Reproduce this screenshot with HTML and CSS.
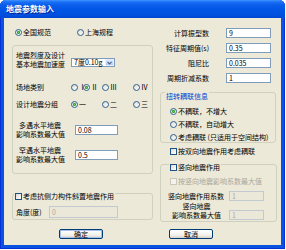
FILE: index.html
```html
<!DOCTYPE html>
<html lang="zh-CN">
<head>
  <meta charset="UTF-8">
  <meta name="viewport" content="width=device-width, initial-scale=1.0">
  <title>地震参数输入</title>
  <link rel="stylesheet" href="styles.css">
</head>
<body>

  <div class="window">
    <div class="titlebar">地震参数输入</div>

    <div class="client">
      <div class="columns">

        <!-- coluna esquerda -->
        <div class="left">
          <div class="code-row">
            <span class="opt opt-code"><span class="radio on"></span>全国规范</span>
            <span class="opt"><span class="radio"></span>上海规程</span>
          </div>

          <div class="group group-site">
            <div class="row row-accel">
              <div class="label label-wide label-two">地震烈度及设计<br>基本地震加速度</div>
              <div class="combo">
                <span class="combo-text">7度0.10g</span>
                <span class="combo-btn">
                  <svg width="5" height="4" viewBox="0 0 5 4"><path d="M0.5 0.8 L2.5 2.8 L4.5 0.8" fill="none" stroke="#4D6185" stroke-width="1.2"/></svg>
                </span>
              </div>
            </div>

            <div class="row row-site">
              <div class="label label-wide">场地类别</div>
              <div class="choices choices-site">
                <span class="opt"><span class="radio"></span>Ⅰ</span>
                <span class="opt"><span class="radio on"></span>Ⅱ</span>
                <span class="opt"><span class="radio"></span>Ⅲ</span>
                <span class="opt"><span class="radio"></span>Ⅳ</span>
              </div>
            </div>

            <div class="row row-group">
              <div class="label label-wide">设计地震分组</div>
              <div class="choices choices-group">
                <span class="opt"><span class="radio on"></span>一</span>
                <span class="opt"><span class="radio"></span>二</span>
                <span class="opt"><span class="radio"></span>三</span>
              </div>
            </div>

            <div class="row row-coef row-often">
              <div class="label label-coef label-two">多遇水平地震<br>影响系数最大值</div>
              <div class="field field-coef">0.08</div>
            </div>

            <div class="row row-coef row-rare">
              <div class="label label-coef label-two">罕遇水平地震<br>影响系数最大值</div>
              <div class="field field-coef">0.5</div>
            </div>
          </div>

          <div class="group group-angle">
            <div class="legend legend-angle"><span class="check"></span>考虑抗侧力构件斜置地震作用</div>
            <div class="row row-angle">
              <div class="label label-angle">角度(度)</div>
              <div class="field field-angle disabled">0</div>
            </div>
          </div>
        </div>

        <!-- coluna direita -->
        <div class="right">
          <div class="param-row">
            <div class="param-label">计算振型数</div>
            <div class="field param-field">9</div>
          </div>
          <div class="param-row">
            <div class="param-label">特征周期值(s)</div>
            <div class="field param-field">0.35</div>
          </div>
          <div class="param-row">
            <div class="param-label">阻尼比</div>
            <div class="field param-field">0.035</div>
          </div>
          <div class="param-row">
            <div class="param-label">周期折减系数</div>
            <div class="field param-field">1</div>
          </div>

          <div class="group group-torsion">
            <div class="legend legend-title">扭转耦联信息</div>
            <div class="opt radio-row first"><span class="radio on"></span>不耦联，不增大</div>
            <div class="opt radio-row"><span class="radio"></span>不耦联，自动增大</div>
            <div class="opt radio-row"><span class="radio"></span>考虑耦联 (只适用于空间结构)</div>
          </div>

          <div class="opt check-row"><span class="check"></span>按双向地震作用考虑耦联</div>

          <div class="group group-vertical">
            <div class="legend legend-vertical"><span class="check"></span>竖向地震作用</div>
            <div class="opt check-row-inner disabled-text"><span class="check off"></span>按竖向地震影响系数最大值</div>
            <div class="row row-vcoef">
              <div class="label label-vcoef">竖向地震作用系数</div>
              <div class="field field-v disabled">1</div>
            </div>
            <div class="row row-vmax">
              <div class="label label-vmax label-two">竖向地震<br>影响系数最大值</div>
              <div class="field field-v disabled">1</div>
            </div>
          </div>
        </div>

      </div>

      <div class="footer">
        <div class="btn btn-default">确定</div>
        <div class="btn">取消</div>
      </div>
    </div>
  </div>

</body>
</html>
```

FILE: styles.css
```css
* {
  box-sizing: border-box;
}

body {
  margin: 0;
  background: #fff;
  font-family: "Noto Sans CJK SC", "Noto Sans", sans-serif;
  font-size: 7px;
  line-height: 7px;
  color: #000;
}

.window {
  width: 285px;
  height: 249px;
  display: flex;
  flex-direction: column;
  background: #0A52E0;
  border-radius: 6px 6px 0 0;
  box-shadow: inset 1px 0 #0831D9, inset -1px 0 #0831D9, inset 0 -1px #0831D9;
}

.titlebar {
  height: 18px;
  padding-left: 6px;
  border-radius: 6px 6px 0 0;
  background: linear-gradient(#3D95FF 0, #1A6FF5 2px, #0A5EEA 5px, #0055E5 10px, #0050DE 15px, #0048D4 18px);
  color: #fff;
  font-size: 8px;
  font-weight: bold;
  line-height: 18px;
  text-shadow: 1px 1px #0A1E8C;
}

.client {
  flex: 1;
  margin: 0 4px 4px;
  padding: 10px 4px 0 8px;
  background: #ECE9D8;
}

.columns {
  display: flex;
}

.left {
  width: 141px;
}

.right {
  width: 117px;
  margin-left: 7px;
}

/* radios e checkboxes */
.opt {
  display: inline-flex;
  align-items: center;
  gap: 1px;
  white-space: nowrap;
}

.radio {
  flex: none;
  width: 7px;
  height: 7px;
  border: 1px solid #2E5F8E;
  border-radius: 50%;
  background: linear-gradient(135deg, #DCDBD5, #fff);
}

.radio.on {
  background: radial-gradient(circle, #5FD45F 0, #21A121 1.2px, transparent 1.8px), linear-gradient(135deg, #DCDBD5, #fff);
}

.check {
  flex: none;
  width: 7px;
  height: 7px;
  border: 1px solid #1C5180;
  background: linear-gradient(135deg, #DCDBD5, #fff);
}

.check.off {
  border-color: #CAC8BB;
  background: #F4F3EE;
}

.disabled-text {
  color: #ACA899;
}

/* caixas de grupo */
.group {
  border: 1px solid #D0D0BF;
  border-radius: 3px;
}

.legend {
  display: inline-flex;
  align-items: center;
  gap: 1px;
  height: 9px;
  margin-top: -5px;
  padding: 0 1px;
  background: #ECE9D8;
  white-space: nowrap;
}

.row {
  display: flex;
  align-items: center;
}

.label {
  white-space: nowrap;
}

.label-two {
  line-height: 9px;
}

.field {
  display: flex;
  align-items: center;
  height: 10px;
  padding-left: 2px;
  border: 1px solid #7F9DB9;
  background: #fff;
}

.field.disabled {
  border-color: #C3C9D1;
  background: #EBE8D9;
  color: #ACA899;
}

/* coluna esquerda */
.code-row {
  display: flex;
  align-items: center;
  height: 9px;
  padding-left: 3px;
}

.opt-code {
  width: 62px;
}

.group-site {
  height: 129px;
  margin-top: 8px;
  padding-left: 3px;
}

.row-accel {
  height: 18px;
  margin-top: 5px;
  align-items: flex-start;
}

.label-wide {
  width: 55px;
}

.combo {
  display: flex;
  width: 44px;
  height: 9px;
  margin-top: 7px;
  border: 1px solid #7F9DB9;
  background: #fff;
}

.combo-text {
  flex: 1;
  align-self: center;
  padding-left: 2px;
}

.combo-btn {
  display: flex;
  align-items: center;
  justify-content: center;
  width: 9px;
  border: 1px solid #E6EEFD;
  border-radius: 1px;
  background: linear-gradient(#DDE8FE, #B5CCFA);
}

.row-site {
  height: 10px;
  margin-top: 13px;
}

.row-group {
  height: 10px;
  margin-top: 7px;
}

.choices {
  display: grid;
  align-items: center;
}

.choices-site {
  grid-template-columns: 12px 19px 31px auto;
}

.choices-group {
  grid-template-columns: 31px 31px auto;
}

.row-coef {
  height: 18px;
}

.row-often {
  margin-top: 12px;
}

.row-rare {
  margin-top: 7px;
}

.label-coef {
  width: 48px;
  text-align: center;
}

.field-coef {
  width: 43px;
  margin-left: 11px;
}

.group-angle {
  height: 27px;
  margin-top: 19px;
}

.legend-angle {
  margin-left: 1px;
}

.row-angle {
  height: 12px;
  margin-top: 5px;
  padding-left: 3px;
}

.label-angle {
  width: 33px;
}

.field-angle {
  width: 69px;
  height: 12px;
}

/* coluna direita */
.param-row {
  display: flex;
  align-items: center;
  height: 10px;
  margin-top: 5px;
}

.param-row:first-child {
  margin-top: 0;
}

.param-label {
  width: 49px;
  text-align: right;
  white-space: nowrap;
}

.param-field {
  width: 45px;
  margin-left: 17px;
}

.group-torsion {
  width: 116px;
  height: 51px;
  margin-top: 9px;
}

.legend-title {
  margin-left: 4px;
  color: #0046D5;
}

.radio-row {
  display: flex;
  height: 9px;
  margin-top: 4px;
  padding-left: 9px;
}

.radio-row.first {
  margin-top: 6px;
}

.check-row {
  display: flex;
  height: 9px;
  margin-top: 4px;
  padding-left: 10px;
}

.group-vertical {
  height: 58px;
  margin-top: 8px;
}

.legend-vertical {
  margin-left: 8px;
}

.check-row-inner {
  display: flex;
  height: 9px;
  margin-top: 5px;
  padding-left: 9px;
}

.row-vcoef {
  height: 10px;
  margin-top: 5px;
}

.row-vmax {
  height: 18px;
  margin-top: 1px;
  align-items: flex-end;
}

.label-vcoef {
  width: 57px;
  margin-left: 7px;
}

.label-vmax {
  width: 57px;
  margin-left: 7px;
  text-align: center;
}

.field-v {
  width: 35px;
  margin-left: 4px;
}

/* botões */
.footer {
  display: flex;
  gap: 66px;
  margin-top: 7px;
  padding-left: 47px;
}

.btn {
  display: flex;
  align-items: center;
  justify-content: center;
  width: 44px;
  height: 10px;
  border: 1px solid #003C74;
  border-radius: 2px;
  background: linear-gradient(#FFFFFF, #F3F2EC 60%, #D8D2C6);
}

.btn-default {
  box-shadow: inset 0 0 0 1px #A9C1EE;
}
```
